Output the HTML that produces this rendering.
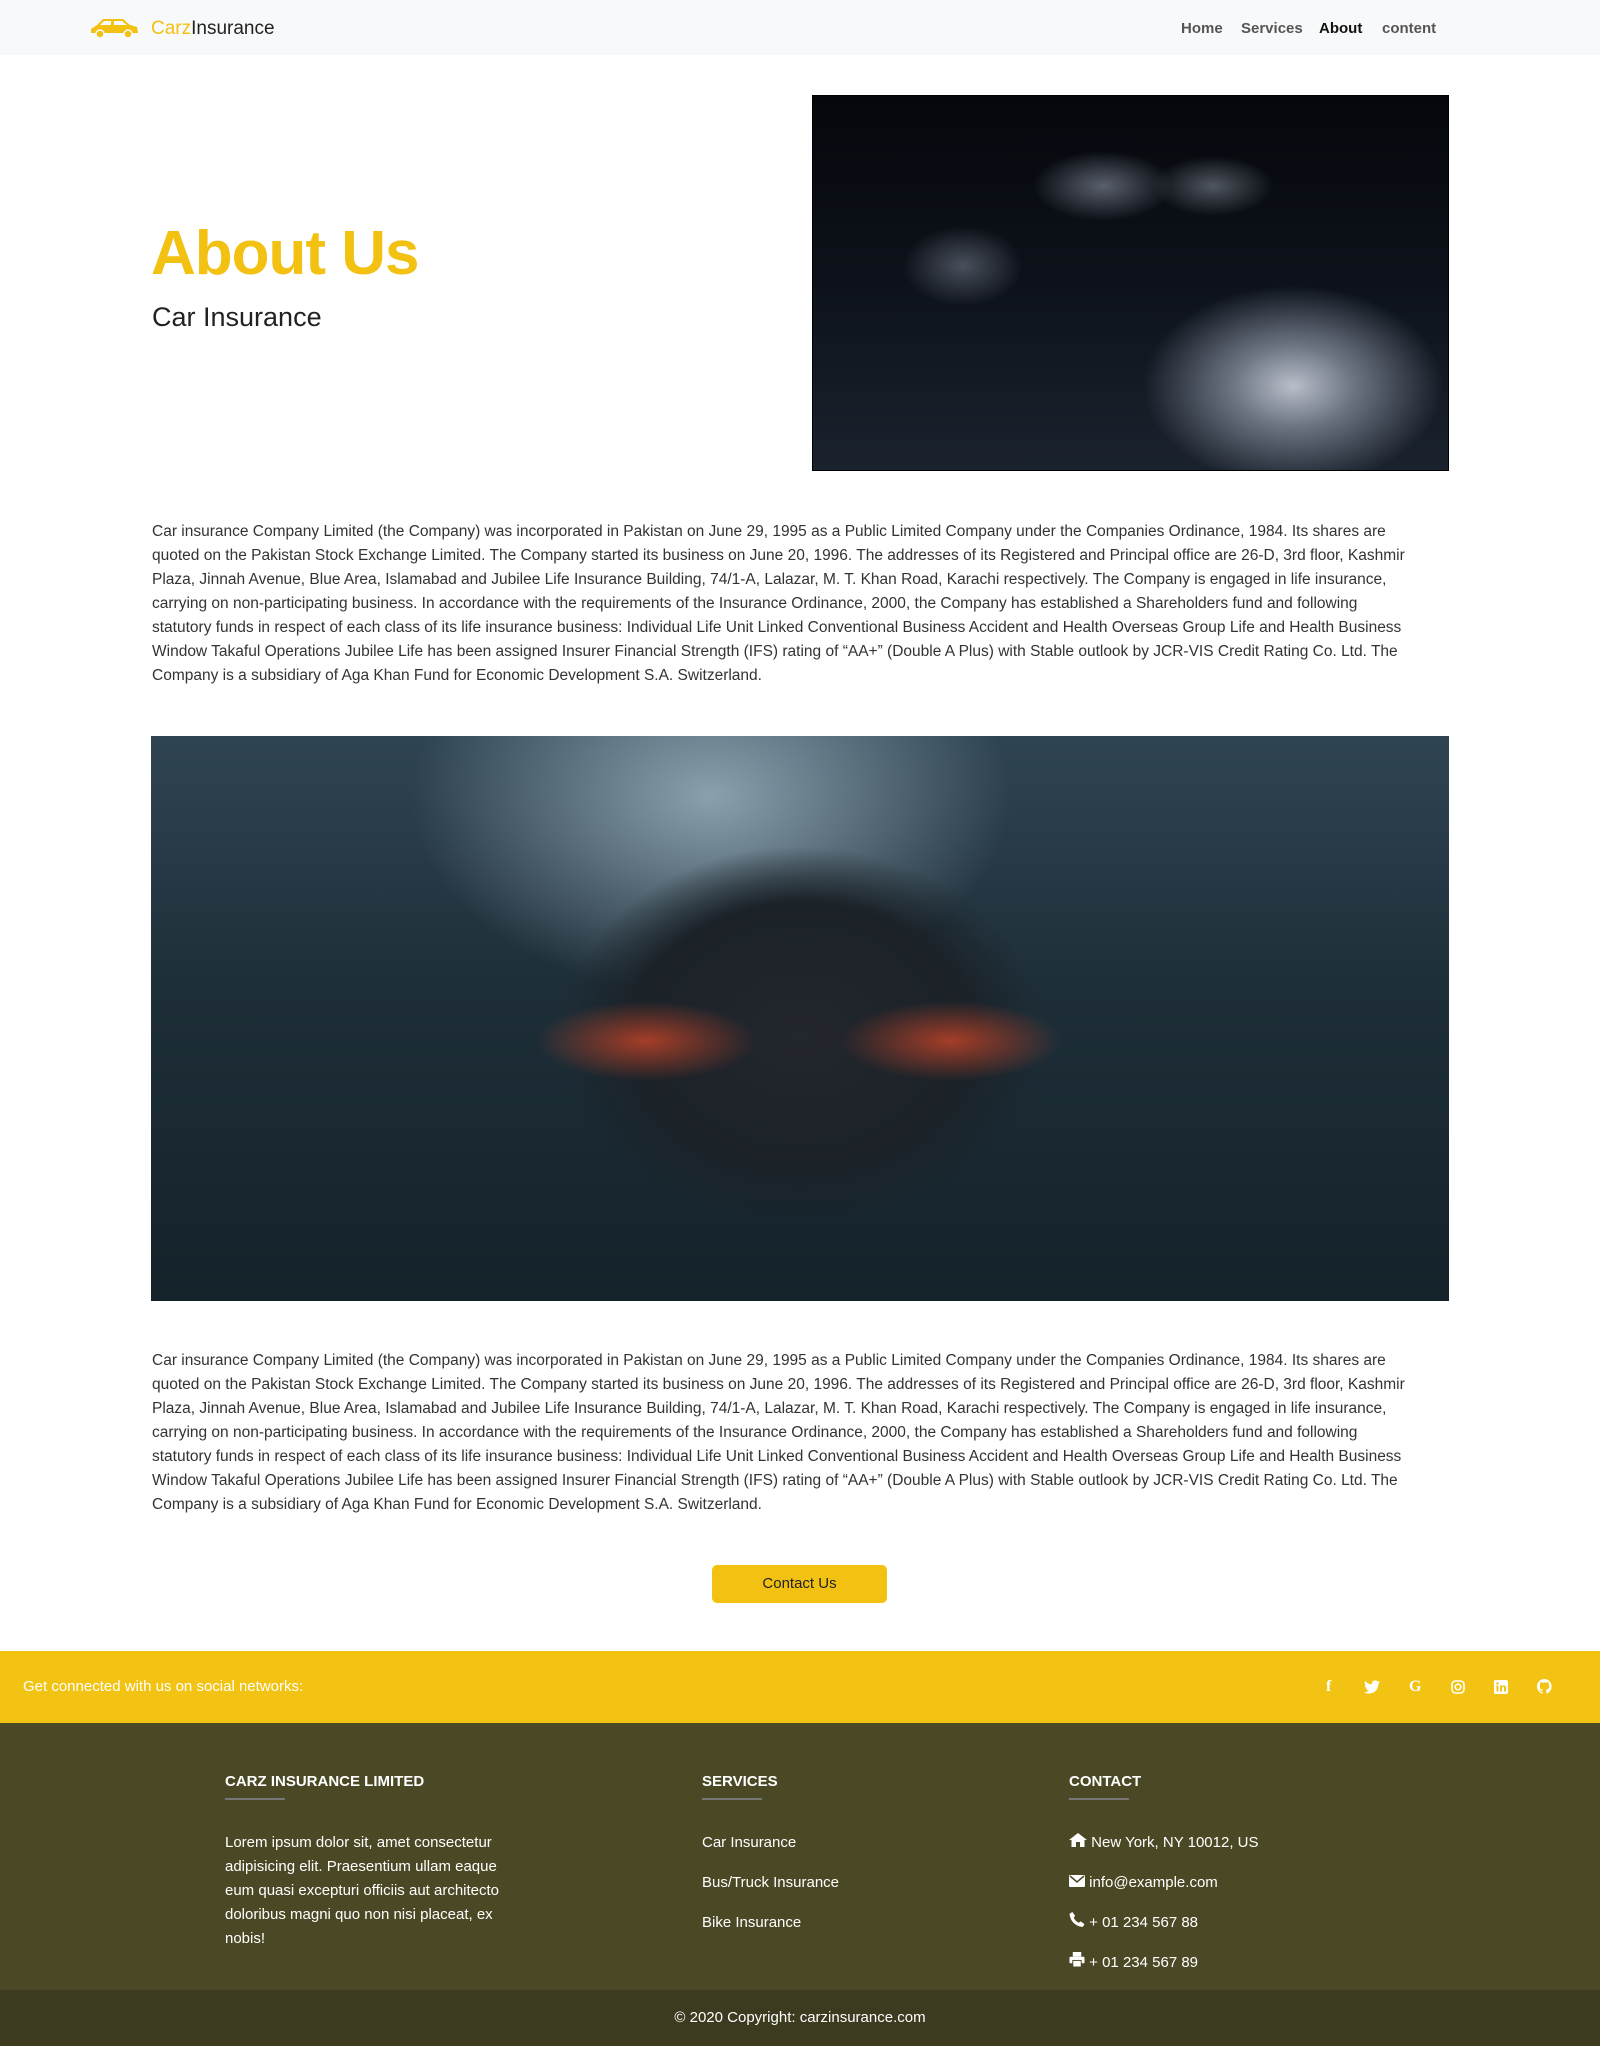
<!DOCTYPE html>
<html><head><meta charset="utf-8"><style>
*{margin:0;padding:0;box-sizing:border-box}
body{width:1600px;height:2046px;font-family:"Liberation Sans",sans-serif;background:#fff;color:#333;position:relative;overflow:hidden}
.nav{position:absolute;left:0;top:0;width:1600px;height:55px;background:#f8f9fa}
.logo{position:absolute;left:89px;top:17px}
.brand{position:absolute;left:151px;top:18px;font-size:19px;color:#222}
.brand span{color:#f2c112}
.menu{position:absolute;top:20px;font-size:15px;font-weight:bold;color:#555}
.hero-img{position:absolute;left:812px;top:95px;width:637px;height:376px;background:radial-gradient(ellipse 150px 100px at 480px 290px,#b9bfca 0%,#6d7584 40%,rgba(20,26,36,0) 100%),radial-gradient(ellipse 60px 40px at 150px 170px,#4a505c,transparent),radial-gradient(ellipse 70px 35px at 290px 90px,#5a606c,transparent),radial-gradient(ellipse 60px 30px at 400px 90px,#50565f,transparent),linear-gradient(180deg,#05070c 0%,#0d121a 50%,#1a222d 100%);border:1px solid #000}
h1{position:absolute;left:151px;top:218px;font-size:62px;color:#f2c112;font-weight:bold;letter-spacing:-1px}
h2{position:absolute;left:152px;top:302px;font-size:27px;font-weight:normal;color:#222}
.p{position:absolute;left:152px;font-size:15.5px;line-height:24px;color:#333;white-space:nowrap}
.img2{position:absolute;left:151px;top:736px;width:1298px;height:565px;background:radial-gradient(ellipse 110px 40px at 495px 305px,rgba(255,80,40,.6),transparent),radial-gradient(ellipse 110px 40px at 800px 305px,rgba(255,80,40,.6),transparent),radial-gradient(ellipse 240px 190px at 650px 300px,#23262d 0%,#1b2228 70%,transparent 100%),radial-gradient(ellipse 300px 200px at 560px 60px,#8aa0ad,transparent),linear-gradient(180deg,#2f4452 0%,#1e2e38 45%,#14222a 100%)}
.btn{position:absolute;left:712px;top:1565px;width:175px;height:38px;background:#f2c112;border-radius:5px;text-align:center;line-height:38px;font-size:15px;color:#222}
.band{position:absolute;left:0;top:1651px;width:1600px;height:72px;background:#f2c313}
.band .t{position:absolute;left:23px;top:27px;font-size:15px;color:#fff}
.soc{position:absolute;top:27px;color:#fff;font-size:16px;font-weight:bold}
.foot{position:absolute;left:0;top:1723px;width:1600px;height:267px;background:#4b4925;color:#fff}
.h{position:absolute;top:50px;font-size:15px;font-weight:bold}
.ul{position:absolute;top:75px;width:60px;height:2px;background:#777}
.ft{position:absolute;font-size:15px;line-height:24px;white-space:nowrap}
.copy{position:absolute;left:0;top:1990px;width:1600px;height:56px;background:#3c3a1f;color:#fff;text-align:center;line-height:56px;font-size:15px}
</style></head><body>
<div class="nav">
<svg class="logo" width="50" height="22" viewBox="0 0 50 22"><path d="M2 12 L8 8 L14 2 L34 2 L41 8 L48 10 L49 16 L2 16 Z" fill="#f2c112"/><path d="M15 4 L22 4 L22 8 L11 8 Z M25 4 L33 4 L38 8 L25 8 Z" fill="#f8f9fa"/><circle cx="11" cy="17" r="4" fill="#f2c112" stroke="#f8f9fa" stroke-width="1.5"/><circle cx="39" cy="17" r="4" fill="#f2c112" stroke="#f8f9fa" stroke-width="1.5"/></svg>
<div class="brand"><span>Carz</span>Insurance</div>
<div class="menu" style="left:1181px">Home</div>
<div class="menu" style="left:1241px">Services</div>
<div class="menu" style="left:1319px;color:#111">About</div>
<div class="menu" style="left:1382px">content</div>
</div>
<h1>About Us</h1>
<h2>Car Insurance</h2>
<div class="hero-img"></div>
<div class="p" style="top:520px">Car insurance Company Limited (the Company) was incorporated in Pakistan on June 29, 1995 as a Public Limited Company under the Companies Ordinance, 1984. Its shares are<br>quoted on the Pakistan Stock Exchange Limited. The Company started its business on June 20, 1996. The addresses of its Registered and Principal office are 26-D, 3rd floor, Kashmir<br>Plaza, Jinnah Avenue, Blue Area, Islamabad and Jubilee Life Insurance Building, 74/1-A, Lalazar, M. T. Khan Road, Karachi respectively. The Company is engaged in life insurance,<br>carrying on non-participating business. In accordance with the requirements of the Insurance Ordinance, 2000, the Company has established a Shareholders fund and following<br>statutory funds in respect of each class of its life insurance business: Individual Life Unit Linked Conventional Business Accident and Health Overseas Group Life and Health Business<br>Window Takaful Operations Jubilee Life has been assigned Insurer Financial Strength (IFS) rating of “AA+” (Double A Plus) with Stable outlook by JCR-VIS Credit Rating Co. Ltd. The<br>Company is a subsidiary of Aga Khan Fund for Economic Development S.A. Switzerland.</div>
<div class="img2"></div>
<div class="p" style="top:1349px">Car insurance Company Limited (the Company) was incorporated in Pakistan on June 29, 1995 as a Public Limited Company under the Companies Ordinance, 1984. Its shares are<br>quoted on the Pakistan Stock Exchange Limited. The Company started its business on June 20, 1996. The addresses of its Registered and Principal office are 26-D, 3rd floor, Kashmir<br>Plaza, Jinnah Avenue, Blue Area, Islamabad and Jubilee Life Insurance Building, 74/1-A, Lalazar, M. T. Khan Road, Karachi respectively. The Company is engaged in life insurance,<br>carrying on non-participating business. In accordance with the requirements of the Insurance Ordinance, 2000, the Company has established a Shareholders fund and following<br>statutory funds in respect of each class of its life insurance business: Individual Life Unit Linked Conventional Business Accident and Health Overseas Group Life and Health Business<br>Window Takaful Operations Jubilee Life has been assigned Insurer Financial Strength (IFS) rating of “AA+” (Double A Plus) with Stable outlook by JCR-VIS Credit Rating Co. Ltd. The<br>Company is a subsidiary of Aga Khan Fund for Economic Development S.A. Switzerland.</div>
<div class="btn">Contact Us</div>
<div class="band"><div class="t">Get connected with us on social networks:</div>
<div class="soc" style="left:1326px;font-family:'Liberation Serif',serif">f</div>
<svg class="soc" style="left:1364px;top:29px" width="16" height="14" viewBox="0 0 16 14"><path d="M16 2c-.6.3-1.2.4-1.9.5.7-.4 1.2-1 1.4-1.8-.6.4-1.3.6-2.1.8C12.8.8 12 .4 11 .4 9.2.4 7.8 1.9 7.8 3.7c0 .3 0 .5.1.7C5.200 4.300 2.800 3 1.100 1 .8 1.500.7 2.100.7 2.700c0 1.100.6 2.100 1.500 2.700-.5 0-1-.2-1.500-.4 0 1.600 1.100 2.900 2.600 3.200-.5.1-1 .2-1.500.1.4 1.300 1.600 2.300 3.100 2.300C3.800 11.500 2.100 12.100.3 12.100H0c1.400.9 3.200 1.500 5 1.500 6 0 9.300-5 9.300-9.300v-.4c.7-.5 1.200-1.100 1.700-1.900z" fill="#fff"/></svg>
<div class="soc" style="left:1409px;font-family:'Liberation Serif',serif">G</div>
<svg class="soc" style="left:1451px;top:29px" width="14" height="14" viewBox="0 0 14 14"><rect x="1" y="1" width="12" height="12" rx="3.5" fill="none" stroke="#fff" stroke-width="1.6"/><circle cx="7" cy="7" r="2.8" fill="none" stroke="#fff" stroke-width="1.6"/></svg>
<svg class="soc" style="left:1494px;top:29px" width="14" height="14" viewBox="0 0 14 14"><rect width="14" height="14" rx="2" fill="#fff"/><rect x="2.5" y="5.5" width="2" height="6" fill="#f2c313"/><circle cx="3.5" cy="3.5" r="1.2" fill="#f2c313"/><path d="M6 5.5h2v1c.5-.8 1.3-1.1 2-1.1 1.3 0 2 .8 2 2.4v3.7h-2V8c0-.8-.3-1.2-.9-1.2S8 7.3 8 8v3.5H6z" fill="#f2c313"/></svg>
<svg class="soc" style="left:1537px;top:28px" width="15" height="15" viewBox="0 0 16 16"><path d="M8 0a8 8 0 0 0-2.5 15.6c.4 0 .5-.2.5-.4v-1.5c-2.2.5-2.7-1-2.7-1-.4-.9-.9-1.2-.9-1.2-.7-.5.1-.5.1-.5.8.1 1.2.8 1.2.8.7 1.3 1.9.9 2.3.7.1-.5.3-.9.5-1.1-1.8-.2-3.6-.9-3.6-4 0-.9.3-1.6.8-2.1-.1-.2-.4-1 .1-2.1 0 0 .7-.2 2.2.8a7.4 7.4 0 0 1 4 0c1.5-1 2.2-.8 2.2-.8.4 1.1.2 1.9.1 2.1.5.6.8 1.3.8 2.1 0 3.1-1.9 3.8-3.6 4 .3.2.5.7.5 1.4v2.2c0 .2.1.5.6.4A8 8 0 0 0 8 0z" fill="#fff"/></svg>
</div>
<div class="foot">
<div class="h" style="left:225px">CARZ INSURANCE LIMITED</div><div class="ul" style="left:225px"></div>
<div class="h" style="left:702px">SERVICES</div><div class="ul" style="left:702px"></div>
<div class="h" style="left:1069px">CONTACT</div><div class="ul" style="left:1069px"></div>
<div class="ft" style="left:225px;top:108px">Lorem ipsum dolor sit, amet consectetur<br>adipisicing elit. Praesentium ullam eaque<br>eum quasi excepturi officiis aut architecto<br>doloribus magni quo non nisi placeat, ex<br>nobis!</div>
<div class="ft" style="left:702px;top:108px">Car Insurance</div>
<div class="ft" style="left:702px;top:148px">Bus/Truck Insurance</div>
<div class="ft" style="left:702px;top:188px">Bike Insurance</div>
<div class="ft" style="left:1069px;top:108px"><svg width="18" height="14" viewBox="0 0 18 14"><path d="M9 0 L18 7 L15.5 7 L15.5 14 L11 14 L11 9 L7 9 L7 14 L2.5 14 L2.5 7 L0 7Z" fill="#fff"/></svg> New York, NY 10012, US</div>
<div class="ft" style="left:1069px;top:148px"><svg width="16" height="12" viewBox="0 0 16 12"><rect width="16" height="12" rx="1" fill="#fff"/><path d="M1 1 L8 7 L15 1" fill="none" stroke="#4b4925" stroke-width="1.5"/></svg> info@example.com</div>
<div class="ft" style="left:1069px;top:188px"><svg width="16" height="15" viewBox="0 0 16 16"><path d="M3 0 L6 4 L4.5 6 C5.5 8.5 7.5 10.5 10 11.5 L12 10 L16 13 L14 16 C6 15 1 10 0 2Z" fill="#fff"/></svg> + 01 234 567 88</div>
<div class="ft" style="left:1069px;top:228px"><svg width="16" height="15" viewBox="0 0 16 16"><rect x="3.5" y="0" width="9" height="5" fill="#fff"/><rect x="0" y="5" width="16" height="7" rx="1" fill="#fff"/><rect x="3.5" y="9" width="9" height="7" fill="#fff" stroke="#4b4925"/></svg> + 01 234 567 89</div>
</div>
<div class="copy">© 2020 Copyright: carzinsurance.com</div>
</body></html>
